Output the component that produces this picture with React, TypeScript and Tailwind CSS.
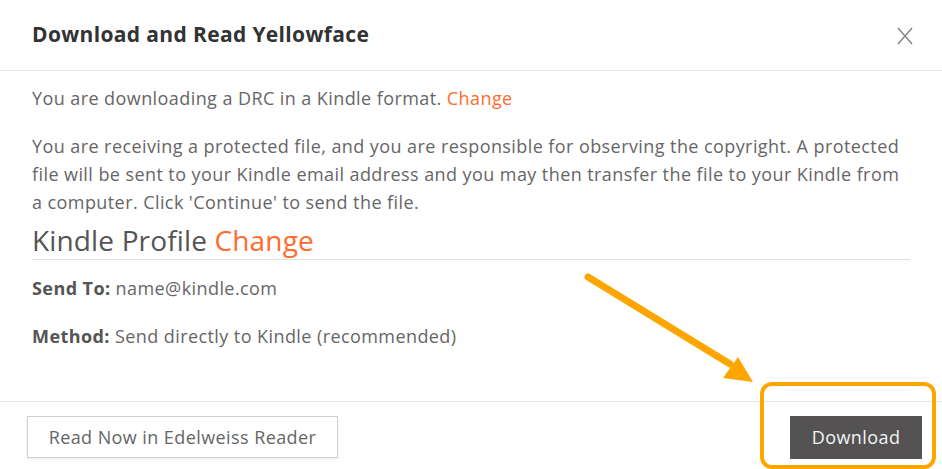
export default function App() {
  return (
    <div
      className="relative w-[942px] h-[469px] overflow-hidden bg-white text-[#666]"
      style={{ fontFamily: '"Open Sans", "Noto Sans", sans-serif' }}
    >
      {/* Header */}
      <div className="flex h-[71px] items-center justify-between border-b border-[#e5e5e5] pl-8 pr-[28px]">
        <h2 className="text-[21px] font-bold tracking-[0.35px] text-[#333]">Download and Read Yellowface</h2>
        <svg width="18" height="18" viewBox="0 0 18 18" className="mt-px">
          <path d="M2 1 L16 17 M16 1 L2 17" stroke="#8a8a8a" strokeWidth="1.6" fill="none" />
        </svg>
      </div>

      {/* Body */}
      <div className="px-8 pt-[13px] text-[18px] leading-[28px] tracking-[0.42px]">
        <p>
          You are downloading a DRC in a Kindle format.{' '}
          <span className="text-[#ff6b2d]">Change</span>
        </p>
        <p className="mt-5">
          You are receiving a protected file, and you are responsible for observing the copyright. A protected
          file will be sent to your Kindle email address and you may then transfer the file to your Kindle from
          a computer. Click 'Continue' to send the file.
        </p>
        <h3 className="mt-[6px] border-b border-[#e2e2e2] pb-px text-[28px] leading-[36px] tracking-[0.15px] text-[#555]">
          Kindle Profile <span className="text-[#ff6b2d]">Change</span>
        </h3>
        <p className="mt-[14px]">
          <span className="font-bold text-[#555]">Send To:</span> name@kindle.com
        </p>
        <p className="mt-5">
          <span className="font-bold text-[#555]">Method:</span> Send directly to Kindle (recommended)
        </p>
      </div>

      {/* Footer */}
      <div className="absolute inset-x-0 top-[401px] flex items-start justify-between border-t border-[#e5e5e5] pl-[27px] pr-[20px] pt-[14px] tracking-[0.42px]">
        <button className="h-[42px] w-[311px] border border-[#cfcfcf] bg-white text-[18px] text-[#666] shadow-[0_1px_2px_rgba(0,0,0,0.08)]">
          Read Now in Edelweiss Reader
        </button>
        <button className="h-[43px] w-[132px] bg-[#545252] text-[18px] text-[#f2f2f2]">Download</button>
      </div>

      {/* Annotation */}
      <div className="absolute left-[760px] top-[382px] h-[87px] w-[176px] rounded-[12px] border-4 border-[#ffa500]" />
      <svg className="absolute left-0 top-0" width="942" height="469" viewBox="0 0 942 469">
        <line x1="588" y1="277" x2="730" y2="364" stroke="#ffa500" strokeWidth="7" strokeLinecap="round" />
        <polygon points="753,382 723,378 738,357" fill="#ffa500" />
      </svg>
    </div>
  );
}
